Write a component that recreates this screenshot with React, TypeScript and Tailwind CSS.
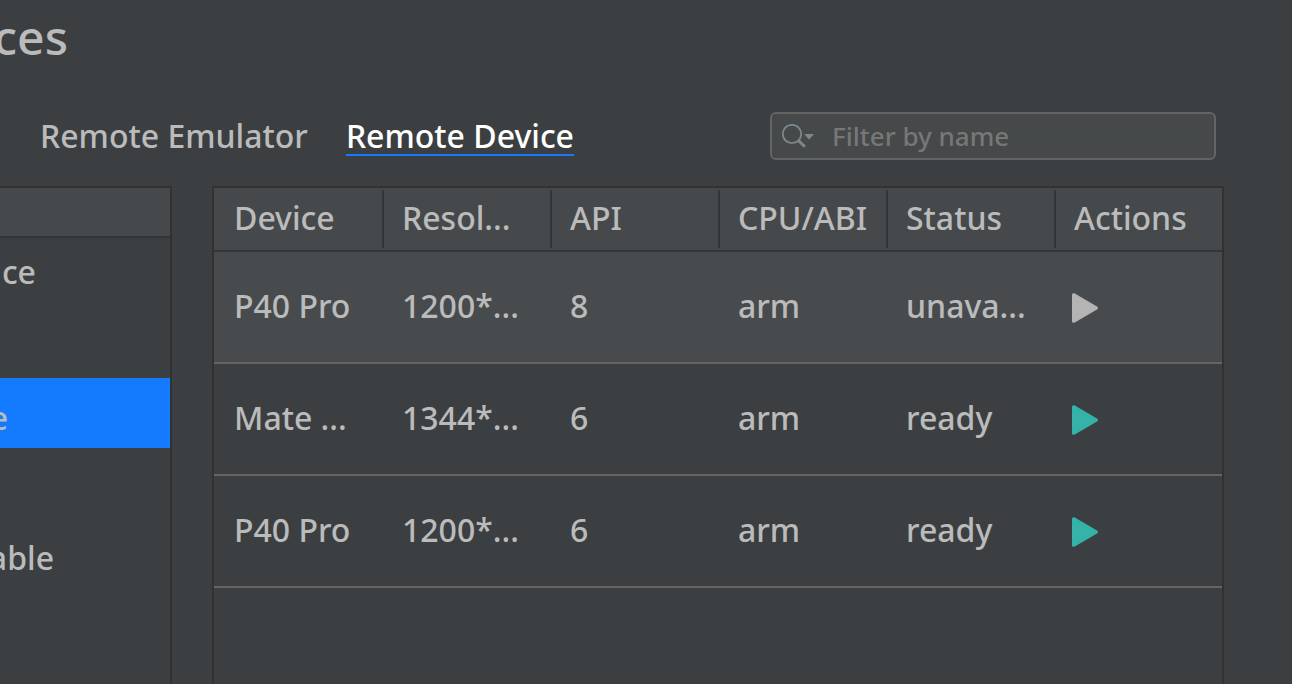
import { useState } from "react";
import clsx from "clsx";

type Device = {
  name: string;
  resolution: string;
  api: string;
  cpu: string;
  status: string;
  ready: boolean;
};

const columns = ["Device", "Resol...", "API", "CPU/ABI", "Status", "Actions"];

const devices: Device[] = [
  { name: "P40 Pro", resolution: "1200*...", api: "8", cpu: "arm", status: "unava...", ready: false },
  { name: "Mate ...", resolution: "1344*...", api: "6", cpu: "arm", status: "ready", ready: true },
  { name: "P40 Pro", resolution: "1200*...", api: "6", cpu: "arm", status: "ready", ready: true }
];

const PlayIcon = ({ ready }: { ready: boolean }) => (
  <svg viewBox="0 0 26 30" className={clsx("h-[30px] w-[26px]", ready ? "fill-[#36b3a8]" : "fill-[#b4b4b4]")}>
    <path d="M0 1.8C0 .4 1.5-.3 2.8.4L25 13.4C26.3 14.2 26.3 15.8 25 16.6L2.8 29.6C1.5 30.3 0 29.6 0 28.2Z" />
  </svg>
);

const SearchIcon = () => (
  <svg viewBox="0 0 32 24" className="h-6 w-8 shrink-0" fill="none" stroke="#7b868d">
    <circle cx="10" cy="10" r="9.2" strokeWidth="1.8" />
    <path d="M16.5 16.5L22.8 22.8" strokeWidth="3" />
    <path d="M22.2 10H32L27 15.8Z" fill="#7b868d" stroke="none" />
  </svg>
);

const Tabs = () => (
  <nav className="flex gap-[38px] pl-10 leading-9">
    <a href="#emulator" className="border-b-2 border-transparent pt-0.5">
      Remote Emulator
    </a>
    <a href="#device" aria-current="page" className="border-b-2 border-[#147bff] pt-0.5 text-white">
      Remote Device
    </a>
  </nav>
);

// Scrolled sideways, only the ends of the labels are in view
const Sidebar = () => (
  <aside className="w-[172px] shrink-0 border-t-2 border-r-2 border-[#323232]">
    <div className="h-[50px] border-b-2 border-[#323638] bg-[#45494b]" />
    <ul>
      <li className="flex h-[70px] items-center overflow-hidden pb-0.5">
        <span className="flex w-9 justify-end">ce</span>
      </li>
      <li className="h-[70px]" />
      <li className="flex h-[70px] items-center overflow-hidden bg-[#147bff] pt-2.5">
        <span className="flex w-2 justify-end">e</span>
      </li>
      <li className="h-[70px]" />
      <li className="flex h-[70px] items-center overflow-hidden pt-2.5">
        <span className="flex w-[54px] justify-end">able</span>
      </li>
    </ul>
  </aside>
);

const DeviceTable = () => (
  <div className="min-w-0 flex-1 border-2 border-b-0 border-[#323232]">
    <table className="w-full table-fixed border-separate border-spacing-0 text-left">
      <thead className="bg-[#45494b]">
        <tr>
          {columns.map((column, i) => (
            <th key={column} scope="col" className="h-16 border-b-2 border-[#323638] p-0 font-medium whitespace-nowrap">
              <div
                className={clsx(
                  "flex h-[58px] items-center border-l-2 pb-0.5 pl-[18px]",
                  i === 0 ? "border-transparent" : "border-[#323638]"
                )}
              >
                {column}
              </div>
            </th>
          ))}
        </tr>
      </thead>
      <tbody>
        {devices.map((device, i) => (
          <tr
            key={i}
            className={clsx(
              "[&>td]:h-28 [&>td]:border-b-2 [&>td]:border-[#646464] [&>td]:p-0 [&>td]:pb-0.5 [&>td]:pl-5 [&>td]:whitespace-nowrap",
              i === 0 && "bg-[#484b4d]"
            )}
          >
            <td>{device.name}</td>
            <td>{device.resolution}</td>
            <td>{device.api}</td>
            <td>{device.cpu}</td>
            <td>{device.status}</td>
            <td>
              <button type="button" aria-label="Run" disabled={!device.ready} className="-ml-0.5 block pt-1">
                <PlayIcon ready={device.ready} />
              </button>
            </td>
          </tr>
        ))}
      </tbody>
    </table>
  </div>
);

const App = () => {
  const [filter, setFilter] = useState("");
  return (
    <main className="flex min-h-screen flex-col overflow-hidden bg-[#3c3f41] font-['Noto_Sans',sans-serif] text-[32px]/[40px] font-medium text-[#bbbbbb]">
      <h1 className="flex h-[76px] w-[68px] items-center justify-end pb-0.5 text-[48px]/[60px]">ces</h1>
      <div className="mt-9 mb-[26px] flex h-12 items-center justify-between pr-[76px]">
        <Tabs />
        <label className="flex h-12 w-[446px] items-center rounded-md border-2 border-[#646464] bg-[#45494a] pl-2.5">
          <SearchIcon />
          <input
            type="text"
            aria-label="Filter by name"
            placeholder="Filter by name"
            value={filter}
            onChange={e => setFilter(e.target.value)}
            className="min-w-0 flex-1 bg-transparent pl-[18px] text-[26px]/[40px] outline-none placeholder:text-[#777777]"
          />
        </label>
      </div>
      <div className="flex flex-1 gap-10 pr-[68px]">
        <Sidebar />
        <DeviceTable />
      </div>
    </main>
  );
};

export default App;
